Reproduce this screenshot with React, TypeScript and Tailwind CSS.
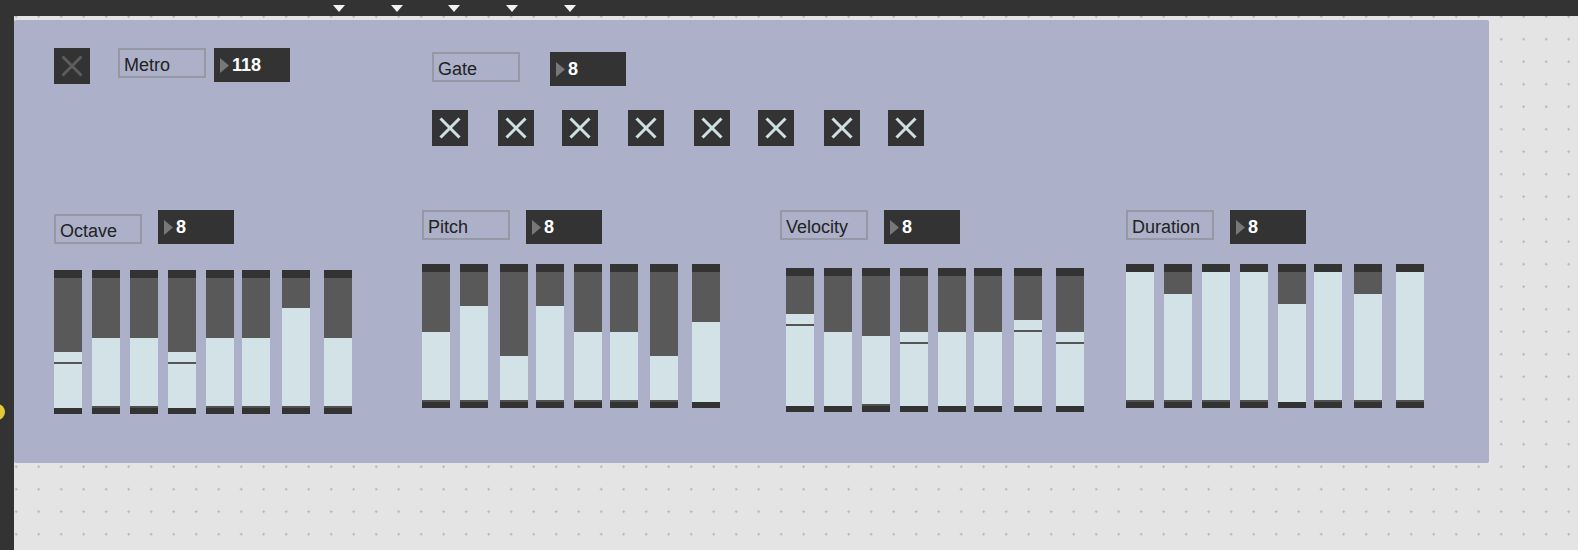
import React from "react";

type S = { fill: number; line?: number; bl?: boolean };

function Label({ text }: { text: string }) {
  return (
    <div className="w-[88px] h-[30px] shrink-0 border-2 border-[#9698a6] flex items-center pl-[4px] pt-[5px] text-[18px] leading-normal text-[#222222] font-['Liberation_Sans',Arial,sans-serif]">
      {text}
    </div>
  );
}

function NumBox({ value }: { value: string }) {
  return (
    <div className="w-[76px] h-[34px] shrink-0 bg-[#333333] flex items-center pl-[6px]">
      <svg width="9" height="15" viewBox="0 0 9 15" className="shrink-0">
        <polygon points="0,0 9,7.5 0,15" fill="#787878" />
      </svg>
      <span className="ml-[3px] text-white font-bold text-[18px] leading-normal font-['Liberation_Sans',Arial,sans-serif]">
        {value}
      </span>
    </div>
  );
}

function Toggle({ on }: { on?: boolean }) {
  return (
    <div className="w-[36px] h-[36px] shrink-0 bg-[#333333]">
      <svg width="36" height="36" viewBox="0 0 36 36">
        <path
          d="M8.5 8.5 L27.5 27.5 M27.5 8.5 L8.5 27.5"
          stroke={on ? "#d0e1e4" : "#5c5c5c"}
          strokeWidth="3"
        />
      </svg>
    </div>
  );
}

function Slider({ s, ml }: { s: S; ml: number }) {
  return (
    <div className="w-[28px] h-[144px] shrink-0 flex flex-col" style={{ marginLeft: ml }}>
      <div className="h-[8px] bg-[#333333]" />
      <div className="bg-[#595959]" style={{ height: s.fill - 8 }} />
      {s.line !== undefined ? (
        <>
          <div className="bg-[#d3e2e6]" style={{ height: s.line - s.fill }} />
          <div className="h-[2px] bg-[#555555]" />
        </>
      ) : null}
      <div className="flex-1 bg-[#d3e2e6]" />
      {s.bl ? <div className="h-[2px] bg-[#505050]" /> : null}
      <div className="h-[6px] bg-[#333333]" />
    </div>
  );
}

function Sliders({ xs, data }: { xs: number[]; data: S[] }) {
  return (
    <div className="flex items-start">
      {data.map((s, i) => (
        <Slider key={i} s={s} ml={i === 0 ? 0 : xs[i] - xs[i - 1] - 28} />
      ))}
    </div>
  );
}

const XS_A = [0, 38, 76, 114, 152, 188, 228, 270];
const XS_P = [0, 38, 78, 114, 152, 188, 228, 270];

const octave: S[] = [
  { fill: 82, line: 92 },
  { fill: 68, bl: true },
  { fill: 68, bl: true },
  { fill: 82, line: 92 },
  { fill: 68, bl: true },
  { fill: 68, bl: true },
  { fill: 38, bl: true },
  { fill: 68, bl: true },
];
const pitch: S[] = [
  { fill: 68, bl: true },
  { fill: 42, bl: true },
  { fill: 92, bl: true },
  { fill: 42, bl: true },
  { fill: 68, bl: true },
  { fill: 68, bl: true },
  { fill: 92, bl: true },
  { fill: 58 },
];
const velocity: S[] = [
  { fill: 46, line: 56 },
  { fill: 64 },
  { fill: 68, bl: true },
  { fill: 64, line: 74 },
  { fill: 64 },
  { fill: 64 },
  { fill: 52, line: 62 },
  { fill: 64, line: 74 },
];
const duration: S[] = [
  { fill: 8, bl: true },
  { fill: 30, bl: true },
  { fill: 8, bl: true },
  { fill: 8, bl: true },
  { fill: 40 },
  { fill: 8, bl: true },
  { fill: 30, bl: true },
  { fill: 8, bl: true },
];

const GATE_XS = [0, 66, 130, 196, 262, 326, 392, 456];

export default function App() {
  return (
    <div className="relative w-[1578px] h-[550px] overflow-hidden bg-[#e4e4e4] [background-image:radial-gradient(circle,#b3b3b3_0.9px,transparent_1.4px)] [background-size:22.5px_22.5px] [background-position:4.95px_5.45px] font-['Liberation_Sans',Arial,sans-serif]">
      {/* top toolbar */}
      <div className="h-[16px] bg-[#333333] flex items-start pl-[333px] pt-[5px] gap-[45.7px]">
        {[0, 1, 2, 3, 4].map((i) => (
          <svg key={i} width="12" height="7" viewBox="0 0 12 7" className="shrink-0">
            <polygon points="0,0 12,0 6,7" fill="#f2f2f2" />
          </svg>
        ))}
      </div>
      <div className="flex h-[534px]">
        <div className="w-[14px] shrink-0 bg-[#333333]" />
        <div className="pt-[4px]">
          <div className="w-[1475px] h-[443px] bg-[#acb0c8] rounded-[2px] pt-[28px] pl-[40px] flex flex-col">
            {/* Row A */}
            <div className="flex items-start">
              <div className="w-[378px] shrink-0 flex items-start">
                <Toggle />
                <div className="ml-[28px]">
                  <Label text="Metro" />
                </div>
                <div className="ml-[8px]">
                  <NumBox value="118" />
                </div>
              </div>
              <div className="flex flex-col pt-[4px]">
                <div className="flex items-start">
                  <Label text="Gate" />
                  <div className="ml-[30px]">
                    <NumBox value="8" />
                  </div>
                </div>
                <div className="mt-[24px] flex items-start">
                  {GATE_XS.map((x, i) => (
                    <div key={i} style={{ marginLeft: i === 0 ? 0 : x - GATE_XS[i - 1] - 36 }}>
                      <Toggle on />
                    </div>
                  ))}
                </div>
              </div>
            </div>

            {/* Row B */}
            <div className="mt-[64px] flex items-start">
              <div className="w-[368px] shrink-0 flex flex-col">
                <div className="flex items-start">
                  <div className="mt-[4px]">
                    <Label text="Octave" />
                  </div>
                  <div className="ml-[16px]">
                    <NumBox value="8" />
                  </div>
                </div>
                <div className="mt-[26px]">
                  <Sliders xs={XS_A} data={octave} />
                </div>
              </div>
              <div className="w-[358px] shrink-0 flex flex-col">
                <div className="flex items-start">
                  <Label text="Pitch" />
                  <div className="ml-[16px]">
                    <NumBox value="8" />
                  </div>
                </div>
                <div className="mt-[20px]">
                  <Sliders xs={XS_P} data={pitch} />
                </div>
              </div>
              <div className="w-[346px] shrink-0 flex flex-col">
                <div className="flex items-start">
                  <Label text="Velocity" />
                  <div className="ml-[16px]">
                    <NumBox value="8" />
                  </div>
                </div>
                <div className="mt-[24px] ml-[6px]">
                  <Sliders xs={XS_A} data={velocity} />
                </div>
              </div>
              <div className="shrink-0 flex flex-col">
                <div className="flex items-start">
                  <Label text="Duration" />
                  <div className="ml-[16px]">
                    <NumBox value="8" />
                  </div>
                </div>
                <div className="mt-[20px]">
                  <Sliders xs={XS_A} data={duration} />
                </div>
              </div>
            </div>
          </div>
        </div>
      </div>
      {/* yellow inlet marker on the left edge */}
      <div className="absolute left-[-11px] top-[404px] w-[16px] h-[16px] rounded-full bg-[#e3c936]" />
    </div>
  );
}
